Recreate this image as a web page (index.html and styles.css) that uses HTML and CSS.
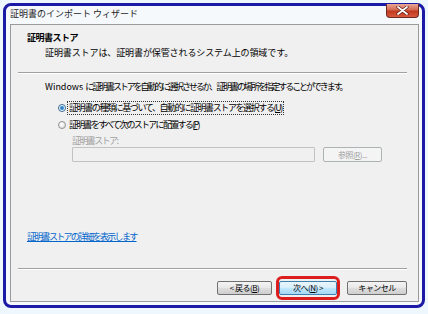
FILE: index.html
```html
<!DOCTYPE html>
<html lang="ja">
<head>
    <meta charset="UTF-8">
    <meta name="viewport" content="width=device-width, initial-scale=1.0">
    <title>証明書のインポート ウィザード</title>
    <link rel="stylesheet" href="styles.css">
</head>
<body>

    <!-- Window -->
    <div class="window">

        <!-- Title bar -->
        <div class="titlebar">
            <span class="title">証明書のインポート ウィザード</span>
            <span class="close-btn">
                <svg width="13" height="9" viewBox="0 0 13 9">
                    <path d="M2 1 L11 8 M11 1 L2 8" stroke="#5a1a10" stroke-width="3.2" stroke-linecap="round"/>
                    <path d="M2 1 L11 8 M11 1 L2 8" stroke="#ffffff" stroke-width="1.8" stroke-linecap="round"/>
                </svg>
            </span>
        </div>

        <!-- Client area -->
        <div class="client">

            <div class="header">
                <div class="header-title">証明書ストア</div>
                <div class="header-sub">証明書ストアは、証明書が保管されるシステム上の領域です。</div>
            </div>

            <div class="sep top-sep"></div>

            <div class="content">
                <p class="intro"><span class="latin">Windows </span>に証明書ストアを自動的に選択させるか、証明書の場所を指定することができます。</p>

                <div class="radio-row first">
                    <span class="radio checked"></span>
                    <span class="radio-label focus">証明書の種類に基づいて、自動的に証明書ストアを選択する(<u>U</u>)</span>
                </div>
                <div class="radio-row second">
                    <span class="radio"></span>
                    <span class="radio-label">証明書をすべて次のストアに配置する(<u>P</u>)</span>
                </div>

                <div class="store-box">
                    <div class="store-label">証明書ストア:</div>
                    <div class="store-fields">
                        <div class="textbox"></div>
                        <span class="btn disabled browse">参照(<u>R</u>)...</span>
                    </div>
                </div>
            </div>

            <a href="#" class="link">証明書ストアの詳細を表示します</a>

            <div class="sep bottom-sep"></div>

            <!-- Buttons -->
            <div class="buttons">
                <span class="btn back">&lt;&nbsp;戻る(<u>B</u>)</span>
                <span class="mark">
                    <span class="btn next">次へ(<u>N</u>)&nbsp;&gt;</span>
                </span>
                <span class="btn cancel">キャンセル</span>
            </div>
        </div>
    </div>

</body>
</html>
```

FILE: styles.css
```css
/* Page */
body {
    margin: 0;
    padding: 0;
    background-color: #eef7fd;
    font-family: "Noto Sans CJK JP", "Noto Sans", sans-serif;
    font-size: 9px;
    line-height: 12px;
    color: #000;
}

/* Window frame */
.window {
    box-sizing: border-box;
    width: 422px;
    height: 305px;
    margin: 3px 0 0 3px;
    border: 3px solid #1a1aa6;
    border-radius: 8px;
    background-color: #f6f9fc;
    padding: 0 3px 3px 4px;
    display: flex;
    flex-direction: column;
}

/* Title bar */
.titlebar {
    height: 18px;
    display: flex;
    align-items: flex-start;
    justify-content: space-between;
}

.titlebar .title {
    margin-top: 2px;
    color: #1e1e1e;
}

.close-btn {
    box-sizing: border-box;
    width: 33px;
    height: 14px;
    margin-top: -2px;
    border: 1px solid #6d2a1e;
    border-top: none;
    border-radius: 0 0 4px 4px;
    background: linear-gradient(#e9a697, #d36a52 45%, #c0391f 55%, #d8593c);
    display: flex;
    align-items: center;
    justify-content: center;
}

/* Client area */
.client {
    flex: 1;
    border: 1px solid #9a9a9a;
    background-color: #f0f0f0;
    display: flex;
    flex-direction: column;
}

.header {
    padding: 7px 0 0 16px;
}

.header-title {
    font-weight: bold;
    letter-spacing: -0.5px;
}

.header-sub {
    margin-top: 3px;
    padding-left: 18px;
    letter-spacing: -0.1px;
}

/* Separator lines */
.sep {
    border-top: 1px solid #a0a0a0;
    border-bottom: 1px solid #ffffff;
    margin: 0 11px 0 7px;
}

.top-sep {
    margin-top: 13px;
}

.bottom-sep {
    margin-top: 25px;
}

/* Main content */
.content {
    flex: 1;
    padding-left: 34px;
}

.intro {
    margin: 7px 0 0 0;
    letter-spacing: -2.1px;
}

.intro .latin {
    letter-spacing: 0;
}

.radio-row {
    display: flex;
    align-items: center;
    height: 14px;
    margin-left: 13px;
}

.radio-row.first {
    margin-top: 8px;
}

.radio-row.second {
    margin-top: 3px;
}

.radio {
    box-sizing: border-box;
    width: 8px;
    height: 8px;
    border-radius: 50%;
    border: 1px solid #8e8f8f;
    background: radial-gradient(circle at 40% 40%, #ffffff, #dcdcdc);
    margin-right: 1px;
}

.radio.checked {
    border-color: #3c6a8e;
    background: radial-gradient(circle, #1d6fb3 0, #5aa2d9 1.8px, #ffffff 2.6px, #e4eef6 4px);
}

.radio-label {
    padding: 0 1px;
    border: 1px dotted transparent;
}

.radio-row.first .radio-label {
    letter-spacing: -1.4px;
}

.radio-row.second .radio-label {
    letter-spacing: -1.7px;
}

.radio-label.focus {
    border-color: #333;
}

.store-box {
    padding-left: 27px;
}

.store-label {
    margin-top: 3px;
    color: #a0a0a0;
    letter-spacing: -1.6px;
}

.store-fields {
    display: flex;
    align-items: flex-start;
    gap: 8px;
}

.textbox {
    box-sizing: border-box;
    width: 243px;
    height: 15px;
    border: 1px solid #c2c2c2;
    border-radius: 1px;
    background-color: #f0f0f0;
}

/* Link */
.link {
    margin-left: 16px;
    color: #0066cc;
    text-decoration: underline;
    letter-spacing: -1.7px;
    align-self: flex-start;
}

/* Buttons */
.buttons {
    margin-top: 6px;
    margin-bottom: 1px;
    padding-right: 11px;
    display: flex;
    justify-content: flex-end;
    align-items: center;
}

.btn {
    box-sizing: border-box;
    height: 14px;
    border: 1px solid #707070;
    border-radius: 2px;
    background: linear-gradient(#f4f4f4, #e9e9e9 45%, #dcdcdc 55%, #cfcfcf);
    display: flex;
    align-items: center;
    justify-content: center;
    font-size: 8px;
    letter-spacing: -0.5px;
    color: #000;
}

.btn.disabled {
    border-color: #adb2b5;
    background: #f4f4f4;
    color: #a0a0a0;
}

.browse {
    width: 59px;
    height: 15px;
}

.back {
    width: 55px;
}

.next {
    width: 58px;
    border-color: #3c7fb1;
    background: linear-gradient(#eaf6fd, #d9f0fc 45%, #bee6fd 55%, #a7d9f5);
}

.cancel {
    width: 60px;
    margin-left: 7px;
}

/* Red highlight round the next button */
.mark {
    margin-left: 4px;
    padding: 2px 0;
    border: 3px solid #dc1e1e;
    border-radius: 6px;
    display: flex;
}
```
